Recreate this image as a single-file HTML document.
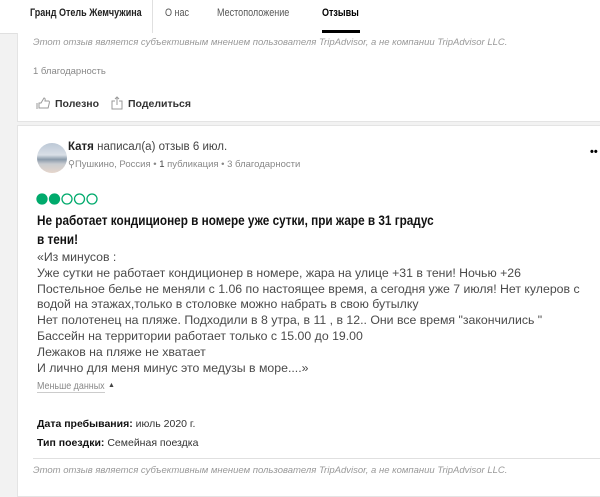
<!DOCTYPE html>
<html><head><meta charset="utf-8"><style>
body{margin:0;width:600px;height:487px;overflow:hidden;background:#f2f2f2;font-family:"Liberation Sans",Arial,sans-serif;position:relative;color:#000}
.a{position:absolute;white-space:nowrap}
.card{position:absolute;left:17px;right:-5px;background:#fff;border:1px solid #e4e4e4}
.g{color:#555}
.it{font-style:italic;color:#999;font-size:9.5px}
.body{font-size:12.3px;color:#4a4a4a;line-height:15.8px}
.sx{transform:scaleX(0.82);transform-origin:0 0}
</style></head><body>
<div class="a" style="left:0;top:0;width:600px;height:33px;background:#fff;border-bottom:1px solid #e0e0e0"></div>
<div class="card" style="top:33px;height:88px;border-top:none"></div>
<div class="card" style="top:125px;height:370px"></div>
<div class="a" style="left:152px;top:0;width:1px;height:33px;background:#e0e0e0"></div>
<div class="a sx" style="left:30px;top:7px;font-size:11px;font-weight:bold;color:#222">Гранд Отель Жемчужина</div>
<div class="a g sx" style="left:165px;top:7px;font-size:11px">О нас</div>
<div class="a g sx" style="left:217px;top:7px;font-size:11px">Местоположение</div>
<div class="a sx" style="left:322px;top:7px;font-size:11px;font-weight:bold">Отзывы</div>
<div class="a" style="left:322px;top:30px;width:38px;height:3px;background:#000"></div>
<div class="a it" style="left:33px;top:37px">Этот отзыв является субъективным мнением пользователя TripAdvisor, а не компании TripAdvisor LLC.</div>
<div class="a" style="left:33px;top:66px;font-size:9.5px;color:#888">1 благодарность</div>
<svg class="a" style="left:36px;top:97px" width="14" height="13" viewBox="0 0 14 13" fill="none" stroke="#999" stroke-width="1"><path d="M1 6v6M3 6h2l3-5c1 0 1.5 1 1 3h3.5c1 0 1 1 .8 2l-1.2 5H3z"/></svg>
<div class="a" style="left:55px;top:98px;font-size:10.5px;font-weight:bold;color:#333">Полезно</div>
<svg class="a" style="left:111px;top:96px" width="12" height="14" viewBox="0 0 12 14" fill="none" stroke="#999" stroke-width="1"><path d="M4 5H1v8h10V5H8M6 9V1M4 3l2-2 2 2"/></svg>
<div class="a" style="left:128px;top:98px;font-size:10.5px;font-weight:bold;color:#333">Поделиться</div>
<div class="a" style="left:37px;top:143px;width:30px;height:30px;border-radius:50%;background:linear-gradient(#bcc8d6 0%,#d9dfe6 40%,#8a9aaa 55%,#c9ccd0 70%,#e6d6cc 100%)"></div>
<div class="a" style="left:68px;top:141px;font-size:11.5px;color:#444"><b style="color:#222">Катя</b> написал(а) отзыв 6 июл.</div>
<div class="a" style="left:68px;top:159px;font-size:9.5px;color:#888">⚲Пушкино, Россия • <span style="color:#444">1</span> публикация • 3 благодарности</div>
<div class="a" style="left:590px;top:146px;font-size:11px;font-weight:bold;">••</div>
<svg class="a" style="left:36px;top:193px" width="62" height="12"><g stroke="#00aa6c" stroke-width="1.3"><circle cx="6" cy="6" r="5" fill="#00aa6c"/><circle cx="18.5" cy="6" r="5" fill="#00aa6c"/><circle cx="31" cy="6" r="5" fill="none"/><circle cx="43.5" cy="6" r="5" fill="none"/><circle cx="56" cy="6" r="5" fill="none"/></g></svg>
<div class="a" style="left:37px;top:211px;font-size:13.5px;font-weight:bold;line-height:19px;color:#111;transform:scaleX(0.87);transform-origin:0 0">Не работает кондиционер в номере уже сутки, при жаре в 31 градус<br>в тени!</div>
<div class="a body" style="left:37px;top:250px">«Из минусов :<br>Уже сутки не работает кондиционер в номере, жара на улице +31 в тени! Ночью +26<br>Постельное белье не меняли с 1.06 по настоящее время, а сегодня уже 7 июля! Нет кулеров с<br>водой на этажах,только в столовке можно набрать в свою бутылку<br>Нет полотенец на пляже. Подходили в 8 утра, в 11 , в 12.. Они все время "закончились "<br>Бассейн на территории работает только с 15.00 до 19.00<br>Лежаков на пляже не хватает<br>И лично для меня минус это медузы в море....»</div>
<div class="a" style="left:37px;top:380px;font-size:10.5px;color:#888;border-bottom:1px solid #ccc;transform:scaleX(0.85);transform-origin:0 0">Меньше данных</div>
<div class="a" style="left:108px;top:382px;font-size:7px;color:#444">▲</div>
<div class="a" style="left:37px;top:418px;font-size:10.5px;color:#333"><b style="color:#111">Дата пребывания:</b> июль 2020 г.</div>
<div class="a" style="left:37px;top:437px;font-size:10.5px;color:#333"><b style="color:#111">Тип поездки:</b> Семейная поездка</div>
<div class="a" style="left:33px;top:458px;width:570px;height:1px;background:#e0e0e0"></div>
<div class="a it" style="left:33px;top:465px">Этот отзыв является субъективным мнением пользователя TripAdvisor, а не компании TripAdvisor LLC.</div>
</body></html>
